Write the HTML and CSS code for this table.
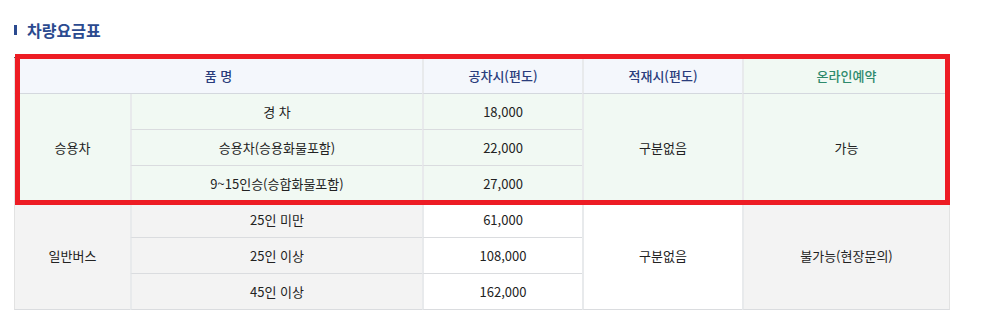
FILE: index.html
```html
<!DOCTYPE html>
<html lang="ko">
<head>
<meta charset="utf-8">
<title>차량요금표</title>
<link rel="stylesheet" href="styles.css">
</head>
<body>
<div class="page">
  <h3 class="title"><span class="bar"></span>차량요금표</h3>
  <div class="table-wrap">
    <table class="fare">
      <colgroup>
        <col class="c1"><col class="c2"><col class="c3"><col class="c4"><col class="c5">
      </colgroup>
      <thead>
        <tr>
          <th colspan="2" class="first">품 명</th>
          <th>공차시(편도)</th>
          <th>적재시(편도)</th>
          <th class="online last">온라인예약</th>
        </tr>
      </thead>
      <tbody>
        <tr class="green">
          <td rowspan="3" class="first">승용차</td>
          <td>경 차</td>
          <td>18,000</td>
          <td rowspan="3">구분없음</td>
          <td rowspan="3" class="last">가능</td>
        </tr>
        <tr class="green">
          <td>승용차(승용화물포함)</td>
          <td>22,000</td>
        </tr>
        <tr class="green">
          <td>9~15인승(승합화물포함)</td>
          <td>27,000</td>
        </tr>
        <tr>
          <td rowspan="3" class="first gray">일반버스</td>
          <td class="gray">25인 미만</td>
          <td>61,000</td>
          <td rowspan="3">구분없음</td>
          <td rowspan="3" class="gray last">불가능(현장문의)</td>
        </tr>
        <tr>
          <td class="gray">25인 이상</td>
          <td>108,000</td>
        </tr>
        <tr>
          <td class="gray">45인 이상</td>
          <td>162,000</td>
        </tr>
      </tbody>
    </table>
    <div class="highlight"></div>
  </div>
</div>
</body>
</html>
```
FILE: styles.css
```css
html, body {
  margin: 0;
  padding: 0;
  background: #ffffff;
}
body {
  font-family: "Noto Sans CJK KR", "Noto Sans", sans-serif;
  color: #333333;
}
.page {
  padding: 20px 0 0 14px;
}
.title {
  margin: 0 0 17px 0;
  height: 20px;
  line-height: 20px;
  font-size: 16px;
  font-weight: 700;
  color: #2b4a8f;
  display: flex;
  align-items: center;
}
.title .bar {
  display: inline-block;
  width: 3px;
  height: 10px;
  background: #2b4a8f;
  margin-right: 10px;
}
.table-wrap {
  position: relative;
  width: 936px;
}
.fare {
  width: 936px;
  table-layout: fixed;
  border-collapse: separate;
  border-spacing: 0;
  border-top: 1px solid #555a66;
  font-size: 13px;
}
.c1 { width: 116px; }
.c2 { width: 292px; }
.c3 { width: 160px; }
.c4 { width: 160px; }
.c5 { width: 208px; }
.fare th, .fare td {
  padding: 0;
  height: 35px;
  text-align: center;
  vertical-align: middle;
  border-bottom: 1px solid #dadcdf;
  border-left: 2px solid #e8eaec;
  box-sizing: content-box;
}
.fare th.first, .fare td.first {
  border-left: 1px solid #e2e2e2;
}
.fare .last {
  border-right: 1px solid #e2e2e2;
}
.fare th {
  background: #f4f7fc;
  color: #2a3d7c;
  font-weight: 500;
  border-bottom-color: #d4d8de;
}
.fare th.online {
  background: #f1f9f3;
  color: #2e8a6c;
}
.fare td {
  background: #ffffff;
  color: #222222;
}
.fare tr.green td {
  background: #f1f9f3;
}
.fare td.gray {
  background: #f3f3f3;
}
.highlight {
  position: absolute;
  left: 1px;
  top: -3px;
  width: 925px;
  height: 141px;
  border: 5px solid #ed1c24;
  pointer-events: none;
}
```
